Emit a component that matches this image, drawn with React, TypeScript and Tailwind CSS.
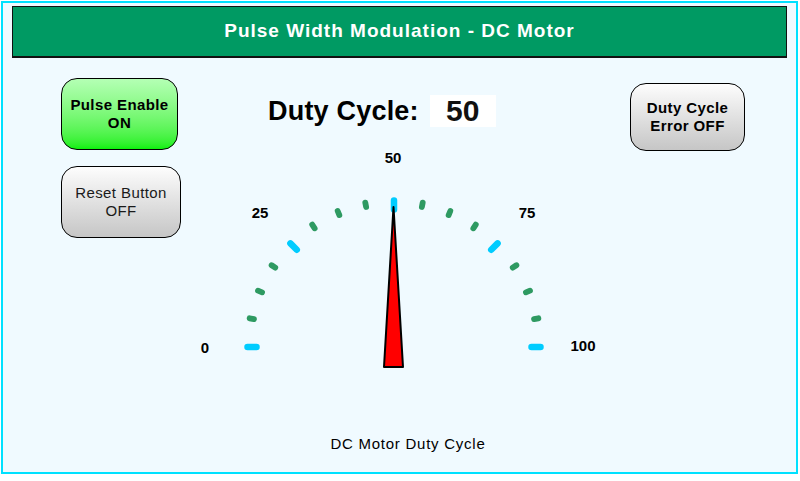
const CX = 212;
const CY = 220;

const labels = [
  { t: "0", x: 23, y: 220 },
  { t: "25", x: 78, y: 85 },
  { t: "50", x: 211, y: 30 },
  { t: "75", x: 345, y: 85 },
  { t: "100", x: 401, y: 218 },
];

function Gauge({ value }: { value: number }) {
  const ticks = Array.from({ length: 17 }, (_, i) => {
    const a = Math.PI - (i * Math.PI) / 16;
    const major = i % 4 === 0;
    const r = major ? 142 : 145;
    const half = major ? 4.5 : 2.2;
    const c = Math.cos(a);
    const s = Math.sin(a);
    return (
      <line
        key={i}
        x1={CX + (r - half) * c}
        y1={CY - (r - half) * s}
        x2={CX + (r + half) * c}
        y2={CY - (r + half) * s}
        stroke={major ? "#00ccff" : "#2e9a62"}
        strokeWidth={major ? 6.5 : 5.8}
        strokeLinecap="round"
      />
    );
  });

  // needle tip sits just under the outer end of the tick it points at
  const a = Math.PI - (value / 100) * Math.PI;
  const tipX = CX - 0.5 + 140 * Math.cos(a);
  const tipY = CY - 140 * Math.sin(a);

  return (
    <svg width="448" height="250" viewBox="0 0 448 250" className="block">
      {ticks}
      {labels.map((l) => (
        <text
          key={l.t}
          x={l.x}
          y={l.y}
          textAnchor="middle"
          dominantBaseline="central"
          fontFamily="'Liberation Sans', Arial, sans-serif"
          fontWeight="bold"
          fontSize="15"
          fill="#000"
        >
          {l.t}
        </text>
      ))}
      <polygon
        points={`${tipX},${tipY} 221,240 202,240`}
        fill="#ff0000"
        stroke="#000"
        strokeWidth="2"
        strokeLinejoin="round"
      />
    </svg>
  );
}

export default function App() {
  const duty = 50;
  return (
    <div className="w-[800px] h-[481px] bg-white" style={{ fontFamily: "'Liberation Sans', Arial, sans-serif" }}>
      <div className="ml-px mt-px w-[797px] h-[473px] border-2 border-[#00e1ff] bg-[#f0faff]">
        <div className="mx-[9px] mt-[3px] h-[52px] bg-[#009a63] border border-b-2 border-[#111] flex items-center justify-center">
          <span className="text-white font-bold text-[19px] tracking-[1px]">
            Pulse Width Modulation - DC Motor
          </span>
        </div>

        <div className="flex pt-[20px]">
          <div className="ml-[58px] w-[120px] flex flex-col gap-4">
            <div className="w-[117px] h-[72px] rounded-[16px] border border-black bg-gradient-to-b from-[#b4ffb4] to-[#08f008] flex flex-col items-center justify-center text-[15px] font-bold leading-[18px] tracking-[0.4px] text-black">
              <span>Pulse Enable</span>
              <span>ON</span>
            </div>
            <div className="w-[120px] h-[72px] rounded-[16px] border border-black bg-gradient-to-b from-[#fdfdfd] to-[#c6c6c6] flex flex-col items-center justify-center text-[15px] leading-[18px] tracking-[0.4px] text-[#1a1a1a]">
              <span>Reset Button</span>
              <span>OFF</span>
            </div>
          </div>

          <div className="w-[448px] ml-px">
            <div className="mt-[17px] pl-[86px] flex items-center gap-[11px]">
              <span className="text-[27px] font-bold leading-none tracking-[0.2px] text-black">Duty Cycle:</span>
              <div className="w-[66px] h-[32px] bg-white flex items-center justify-center text-[30px] font-bold leading-none text-[#111]">
                {duty}
              </div>
            </div>
            <Gauge value={duty} />
            <div className="mt-[56px] pl-[4px] text-center text-[15px] tracking-[0.75px] text-black">
              DC Motor Duty Cycle
            </div>
          </div>

          <div className="mt-[5px]">
            <div className="w-[115px] h-[68px] rounded-[16px] border border-black bg-gradient-to-b from-[#fdfdfd] to-[#c6c6c6] flex flex-col items-center justify-center text-[15px] font-bold leading-[18px] tracking-[0.4px] text-black">
              <span>Duty Cycle</span>
              <span>Error OFF</span>
            </div>
          </div>
        </div>
      </div>
    </div>
  );
}
